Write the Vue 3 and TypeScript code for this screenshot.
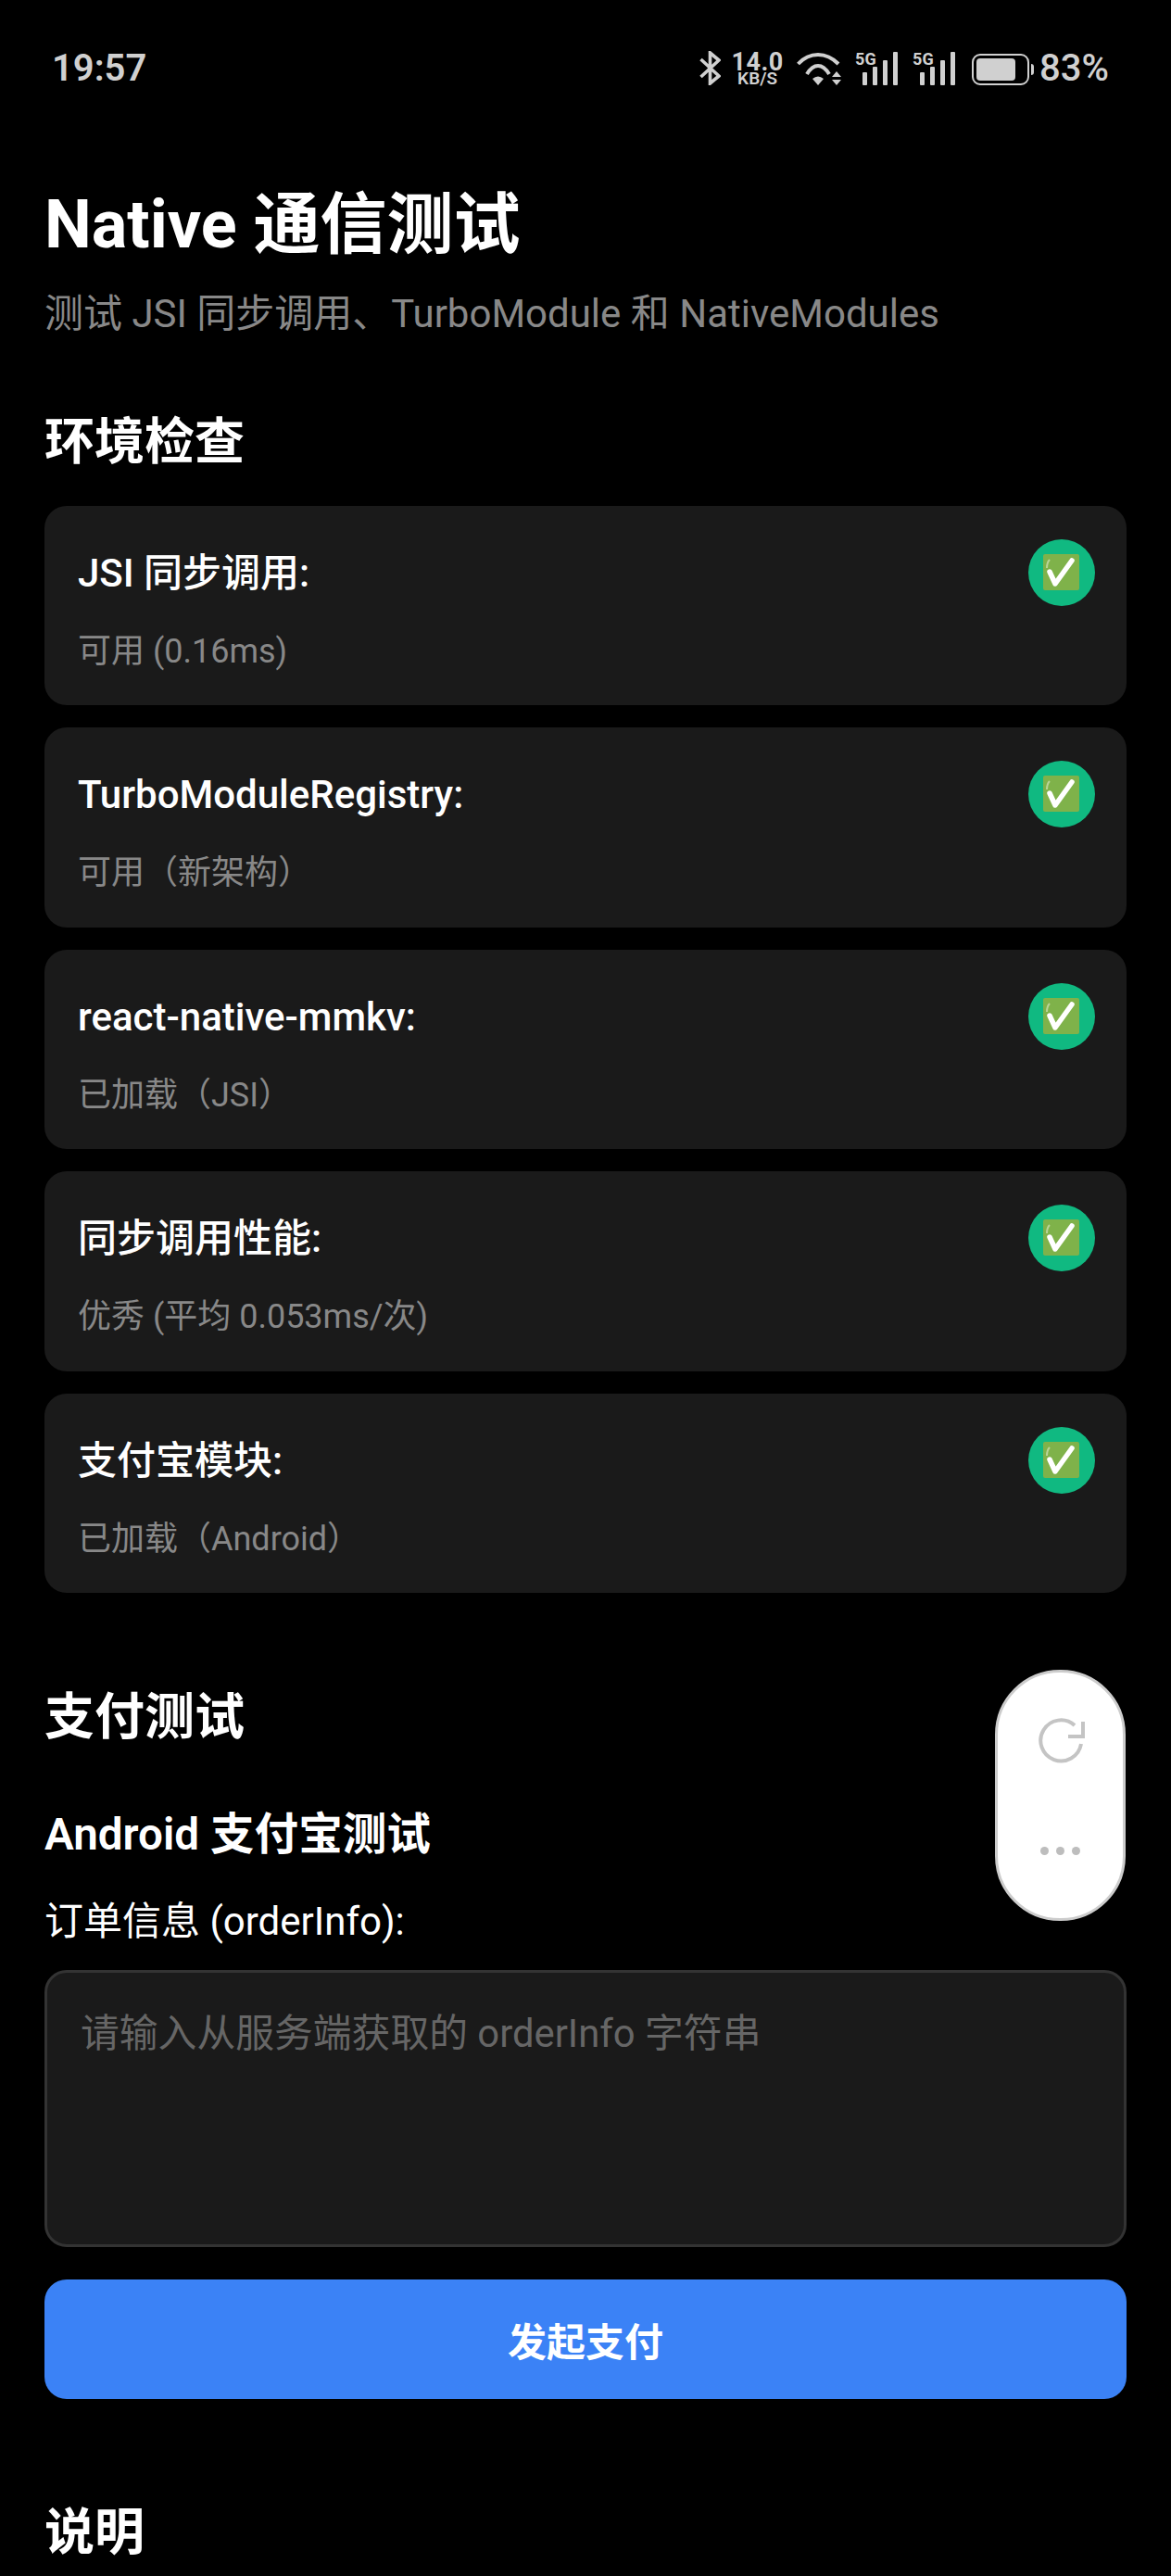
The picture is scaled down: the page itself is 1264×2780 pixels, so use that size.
<template>
  <div class="page">
    <!-- 状态栏 -->
    <div class="status-bar">
      <span class="time">19:57</span>
      <div class="status-right">
        <svg class="bt" width="23" height="37" viewBox="0 0 23 37" fill="none" stroke="#d0d0d0" stroke-width="3.6">
          <path d="M1.5 9 L21 27 L11.5 35 V2 L21 10 L1.5 28" />
        </svg>
        <div class="speed">
          <span class="speed-num">14.0</span>
          <span class="speed-unit">KB/S</span>
        </div>
        <svg class="wifi" width="49" height="35" viewBox="0 0 49 35" fill="none" stroke="#d0d0d0" stroke-width="4">
          <path d="M1.5 12 C8 5 15 2 23 2 C31 2 38 5 45 12" />
          <path d="M11 23 C14 18 18 14 23 14 C28 14 32 18 35 23" />
          <path d="M23 35 L17 28 Q23 23 29 28 Z" fill="#d0d0d0" stroke="none" />
          <path d="M43 20 L48 26 H38 Z M38 29 H48 L43 35 Z" fill="#d0d0d0" stroke="none" />
        </svg>
        <div class="signal" v-for="n in 2" :key="n">
          <span class="sig-label">5G</span>
          <div class="bars">
            <i v-for="h in barHeights" :key="h" :style="{ height: h + 'px' }"></i>
          </div>
        </div>
        <div class="battery">
          <div class="battery-fill"></div>
        </div>
        <span class="battery-text">83%</span>
      </div>
    </div>

    <main class="content">
      <h1 class="title">Native 通信测试</h1>
      <p class="subtitle">测试 JSI 同步调用、TurboModule 和 NativeModules</p>

      <h2 class="section-title check-title">环境检查</h2>
      <div class="check-list">
        <div class="check-card" v-for="item in checks" :key="item.name">
          <div class="check-text">
            <div class="check-name">{{ item.name }}</div>
            <div class="check-desc">{{ item.desc }}</div>
          </div>
          <div class="check-status">
            <svg width="42" height="42" viewBox="0 0 42 42">
              <rect x="1" y="1" width="39" height="39" rx="2" fill="#7fb24a" />
              <path d="M8 7 Q5 10 5 16" stroke="#b9d49a" stroke-width="2" fill="none" />
              <path d="M8 20 L14 33 L32 8" stroke="#fff" stroke-width="5.5" stroke-linecap="round" stroke-linejoin="round" fill="none" />
            </svg>
          </div>
        </div>
      </div>

      <h2 class="section-title pay-title">支付测试</h2>
      <h3 class="sub-title">Android 支付宝测试</h3>
      <label class="field-label">订单信息 (orderInfo):</label>
      <textarea class="order-input" placeholder="请输入从服务端获取的 orderInfo 字符串"></textarea>
      <button type="button" class="pay-button">发起支付</button>

      <h2 class="section-title note-title">说明</h2>
    </main>

    <!-- 小程序悬浮胶囊 -->
    <div class="float-pill">
      <svg width="54" height="52" viewBox="0 0 54 52" fill="none" stroke="#c4c4c4" stroke-width="4">
        <path d="M49 28 A22 22 0 1 1 42 8" />
        <path d="M51 4 V20 H35" />
      </svg>
      <div class="dots"><i></i><i></i><i></i></div>
    </div>
  </div>
</template>

<script setup lang="ts">
const barHeights = [14, 20, 27, 36]

const checks = [
  { name: 'JSI 同步调用:', desc: '可用 (0.16ms)' },
  { name: 'TurboModuleRegistry:', desc: '可用（新架构）' },
  { name: 'react-native-mmkv:', desc: '已加载（JSI）' },
  { name: '同步调用性能:', desc: '优秀 (平均 0.053ms/次)' },
  { name: '支付宝模块:', desc: '已加载（Android）' }
]
</script>

<style>
html, body {
  background: #000;
}
</style>

<style scoped>
.page {
  position: relative;
  width: 1264px;
  height: 2780px;
  overflow: hidden;
  background: #000;
  color: #fff;
  font-family: Roboto, "Noto Sans CJK SC", sans-serif;
}

.status-bar {
  display: flex;
  justify-content: space-between;
  align-items: center;
  height: 146px;
  padding: 0 67px 0 56px;
  box-sizing: border-box;
  color: #d0d0d0;
}

.time {
  font-size: 40px;
  font-weight: 600;
}

.status-right {
  display: flex;
  align-items: flex-end;
  height: 37px;
}

.speed {
  display: flex;
  flex-direction: column;
  align-items: center;
  width: 53px;
  margin-left: 13px;
  font-weight: 700;
  line-height: 1;
}

.speed-num {
  font-size: 27px;
  height: 22px;
  line-height: 22px;
  letter-spacing: 0.5px;
}

.speed-unit {
  font-size: 19px;
  height: 14px;
  line-height: 14px;
  font-weight: 600;
}

.wifi {
  margin-left: 16px;
}

.signal {
  display: flex;
  align-items: flex-end;
  justify-content: flex-end;
  position: relative;
  margin-left: 14px;
  width: 46px;
  height: 35px;
}

.signal + .signal {
  margin-left: 16px;
}

.sig-label {
  position: absolute;
  left: 0;
  top: 0;
  font-size: 18px;
  font-weight: 700;
  line-height: 14px;
}

.bars {
  display: flex;
  align-items: flex-end;
  gap: 6px;
}

.bars i {
  display: block;
  width: 5px;
  border-radius: 1px;
  background: #d0d0d0;
}

.battery {
  position: relative;
  width: 62px;
  height: 34px;
  margin-left: 18px;
  margin-right: 4px;
  padding: 3px;
  box-sizing: border-box;
  border: 2px solid #d0d0d0;
  border-radius: 9px;
}

.battery::after {
  content: '';
  position: absolute;
  right: -7px;
  top: 9px;
  width: 3px;
  height: 12px;
  background: #d0d0d0;
  border-radius: 0 3px 3px 0;
}

.battery-fill {
  width: 80%;
  height: 100%;
  background: #d0d0d0;
  border-radius: 4px;
}

.battery-text {
  margin-left: 7px;
  font-size: 40px;
  font-weight: 500;
  line-height: 36px;
}

.content {
  padding: 0 48px;
}

.title {
  margin: 55px 0 0;
  font-size: 72px;
  font-weight: 700;
  line-height: 84px;
}

.subtitle {
  margin: 26px 0 0;
  font-size: 42px;
  line-height: 56px;
  color: #888;
}

.section-title {
  margin: 0;
  font-size: 54px;
  font-weight: 700;
  line-height: 66px;
}

.check-title {
  margin-top: 78px;
}

.check-list {
  display: flex;
  flex-direction: column;
  gap: 24px;
  margin-top: 34.5px;
}

.check-card {
  display: flex;
  justify-content: space-between;
  height: 215.5px;
  padding: 36px 34px 36px 36px;
  box-sizing: border-box;
  background: #1a1a1a;
  border-radius: 24px;
}

.check-text {
  padding-top: 12px;
}

.check-name {
  font-size: 42px;
  font-weight: 500;
  line-height: 50px;
}

.check-desc {
  margin-top: 38px;
  font-size: 36px;
  line-height: 42px;
  color: #888;
}

.check-status {
  display: flex;
  align-items: center;
  justify-content: center;
  width: 72px;
  height: 72px;
  border-radius: 50%;
  background: #10b981;
}

.pay-title {
  margin-top: 102px;
}

.sub-title {
  margin: 65px 0 0;
  font-size: 47.6px;
  font-weight: 600;
  line-height: 56px;
}

.field-label {
  display: block;
  margin-top: 40px;
  font-size: 42px;
  line-height: 52px;
  color: #fff;
}

.order-input {
  display: block;
  width: 100%;
  height: 299px;
  margin-top: 26px;
  padding: 41px 36px;
  box-sizing: border-box;
  background: #1a1a1a;
  border: 3px solid #333;
  border-radius: 24px;
  color: #fff;
  font-family: inherit;
  font-size: 41.8px;
  line-height: 50px;
  resize: none;
  outline: none;
}

.order-input::placeholder {
  color: #666;
}

.pay-button {
  display: block;
  width: 100%;
  height: 129px;
  margin-top: 35px;
  background: #3b82f6;
  border: none;
  border-radius: 24px;
  color: #fff;
  font-family: inherit;
  font-size: 42px;
  font-weight: 700;
}

.note-title {
  margin-top: 112px;
}

.float-pill {
  position: absolute;
  left: 1074px;
  top: 1802px;
  width: 141px;
  height: 271px;
  box-sizing: border-box;
  display: flex;
  flex-direction: column;
  align-items: center;
  padding-top: 49px;
  background: #fff;
  border: 3px solid #ccc;
  border-radius: 70px;
}

.dots {
  display: flex;
  gap: 8px;
  margin-top: 87px;
}

.dots i {
  display: block;
  width: 9px;
  height: 9px;
  border-radius: 50%;
  background: #bdbdbd;
}
</style>
